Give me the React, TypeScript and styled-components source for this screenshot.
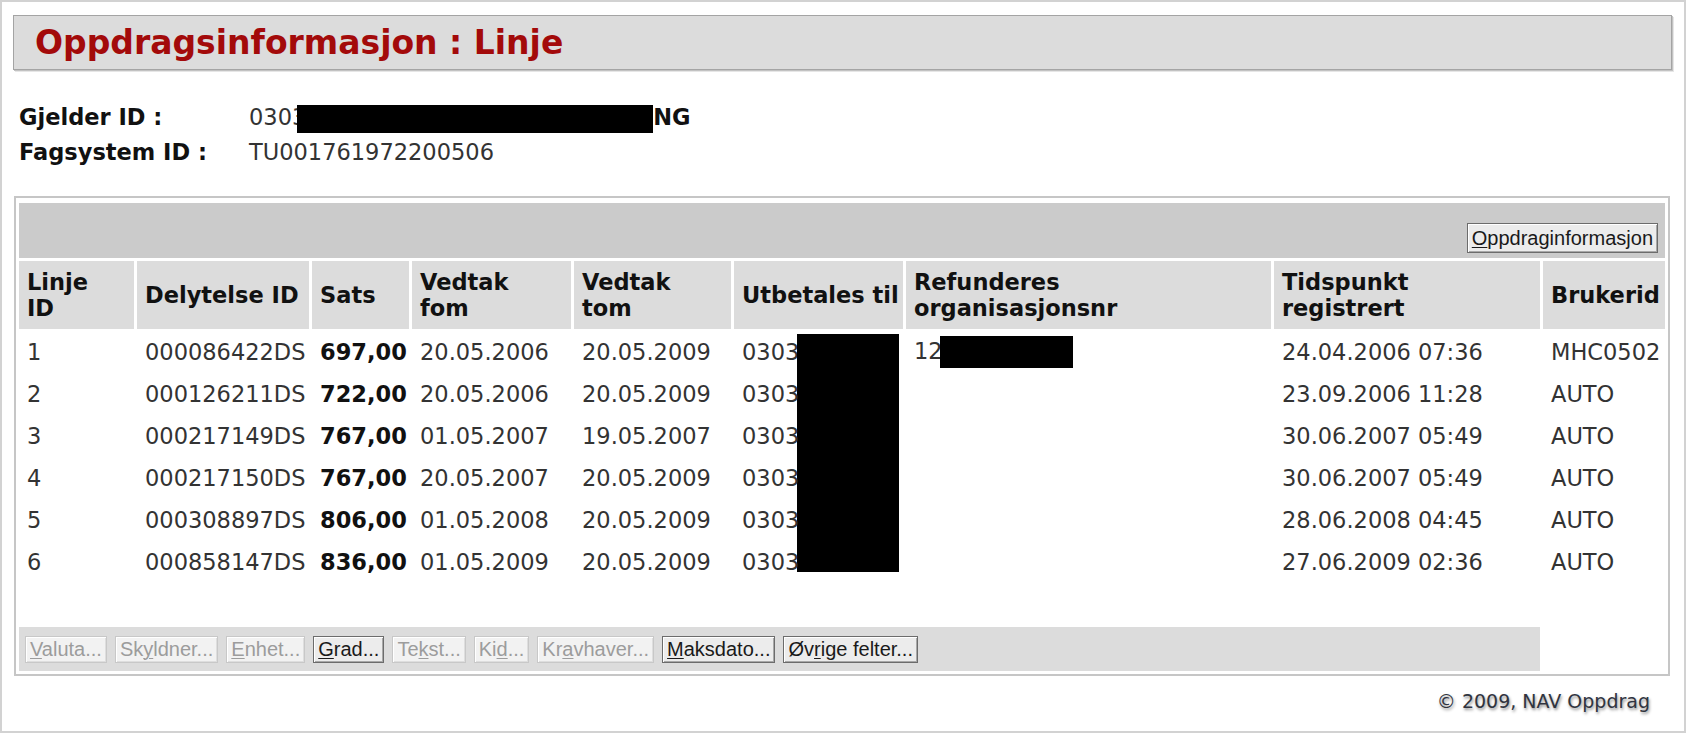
import React from "react";
import styled, { createGlobalStyle } from "styled-components";

const GlobalStyle = createGlobalStyle`
  html, body { margin: 0; padding: 0; background: #ffffff; }
  body { font-family: "DejaVu Sans", Verdana, sans-serif; }
`;

const Frame = styled.div`
  box-sizing: border-box;
  width: 1686px;
  height: 733px;
  border: 2px solid #d2d2d2;
  padding: 13px 12px 0 11px;
  font-family: "DejaVu Sans", Verdana, sans-serif;
  color: #333333;
`;

const TitleBar = styled.h1`
  margin: 0;
  box-sizing: border-box;
  height: 55px;
  display: flex;
  align-items: center;
  padding-left: 21px;
  background: #dcdcdc;
  border: 1px solid #a4a4a4;
  box-shadow: 1px 1px 0 #c2c2c2, 2px 2px 0 #e6e6e6;
  color: #a30a0a;
  font-size: 33px;
  font-weight: bold;
`;

const InfoGrid = styled.dl`
  margin: 30px 0 0 6px;
  display: grid;
  grid-template-columns: 230px auto;
  font-size: 22.5px;
  line-height: 35px;
`;

const InfoLabel = styled.dt`
  margin: 0;
  font-weight: bold;
  color: #111111;
`;

const InfoValue = styled.dd`
  margin: 0;
  color: #333333;
  white-space: nowrap;
`;

const Strong = styled.b`
  color: #111111;
`;

const Blackout = styled.span<{ $w: number; $h: number; $shift?: number }>`
  display: inline-block;
  width: ${(p) => p.$w}px;
  height: ${(p) => p.$h}px;
  margin-left: ${(p) => p.$shift ?? 0}px;
  background: #000000;
  vertical-align: middle;
`;

const Overlay = styled.span<{ $left: number; $top: number; $w: number; $h: number }>`
  position: absolute;
  left: ${(p) => p.$left}px;
  top: ${(p) => p.$top}px;
  width: ${(p) => p.$w}px;
  height: ${(p) => p.$h}px;
  background: #000000;
`;

const Panel = styled.section`
  margin: 26px 2px 0 1px;
  border: 2px solid #c6c6c6;
  padding-top: 2px;
`;

const Table = styled.table`
  width: 100%;
  table-layout: fixed;
  border-collapse: separate;
  border-spacing: 3px;
  font-size: 22.5px;
  line-height: 26px;
`;

const Col = styled.col<{ $w?: number }>`
  width: ${(p) => (p.$w ? `${p.$w}px` : "auto")};
`;

const ToolbarCell = styled.td`
  padding: 0;
  background: #cbcbcb;
`;

const Toolbar = styled.div`
  box-sizing: border-box;
  height: 55px;
  display: flex;
  align-items: flex-end;
  justify-content: flex-end;
  padding: 0 7px 5px;
`;

const HeadCell = styled.th`
  height: 68px;
  padding: 0 7px 0 8px;
  background: #dcdcdc;
  color: #111111;
  font-weight: bold;
  text-align: left;
  vertical-align: middle;
  white-space: nowrap;
`;

const Cell = styled.td<{ $bold?: boolean }>`
  position: relative;
  height: 39px;
  padding: 0 8px;
  white-space: nowrap;
  vertical-align: middle;
  color: ${(p) => (p.$bold ? "#111111" : "#333333")};
  font-weight: ${(p) => (p.$bold ? "bold" : "normal")};
`;

const SpacerCell = styled.td`
  height: 40px;
  padding: 0;
`;

const BarCell = styled.td`
  padding: 0;
  background: #dcdcdc;
`;

const EmptyCell = styled.td`
  padding: 0;
`;

const ButtonBar = styled.div`
  box-sizing: border-box;
  height: 44px;
  display: flex;
  align-items: center;
  gap: 8px;
  padding-left: 6px;
`;

const WinButton = styled.button<{ $h?: number }>`
  box-sizing: border-box;
  height: ${(p) => p.$h ?? 27}px;
  padding: 0 4px;
  margin: 0;
  font-family: "Liberation Sans", Arial, sans-serif;
  font-size: 20px;
  line-height: 1;
  white-space: nowrap;
  color: #1a1a1a;
  background: #ececec;
  border: 1px solid #6c6c6c;
  border-radius: 0;
  box-shadow: inset 1px 1px 0 #ffffff, inset -1px -1px 0 #a8a8a8;
  cursor: default;

  &:disabled {
    color: #9c9c9c;
    background: #f2f2f2;
    border-color: #c8c8c8;
    box-shadow: inset 1px 1px 0 #ffffff, inset -1px -1px 0 #dedede;
  }

  u {
    text-decoration-thickness: 1px;
    text-underline-offset: 2px;
  }
`;

const Footer = styled.footer`
  margin-top: 13px;
  padding-right: 22px;
  text-align: right;
  font-size: 19px;
  line-height: 24px;
  color: #30343f;
  text-shadow: 1px 2px 3px rgba(0, 0, 0, 0.45);
`;

type Row = {
  id: string;
  del: string;
  sats: string;
  fom: string;
  tom: string;
  tid: string;
  bruker: string;
};

const rows: Row[] = [
  { id: "1", del: "000086422DS", sats: "697,00", fom: "20.05.2006", tom: "20.05.2009", tid: "24.04.2006 07:36", bruker: "MHC0502" },
  { id: "2", del: "000126211DS", sats: "722,00", fom: "20.05.2006", tom: "20.05.2009", tid: "23.09.2006 11:28", bruker: "AUTO" },
  { id: "3", del: "000217149DS", sats: "767,00", fom: "01.05.2007", tom: "19.05.2007", tid: "30.06.2007 05:49", bruker: "AUTO" },
  { id: "4", del: "000217150DS", sats: "767,00", fom: "20.05.2007", tom: "20.05.2009", tid: "30.06.2007 05:49", bruker: "AUTO" },
  { id: "5", del: "000308897DS", sats: "806,00", fom: "01.05.2008", tom: "20.05.2009", tid: "28.06.2008 04:45", bruker: "AUTO" },
  { id: "6", del: "000858147DS", sats: "836,00", fom: "01.05.2009", tom: "20.05.2009", tid: "27.06.2009 02:36", bruker: "AUTO" },
];

type Btn = { pre: string; key: string; post: string; enabled?: boolean };

const buttons: Btn[] = [
  { pre: "", key: "V", post: "aluta..." },
  { pre: "Sk", key: "y", post: "ldner..." },
  { pre: "", key: "E", post: "nhet..." },
  { pre: "", key: "G", post: "rad...", enabled: true },
  { pre: "Te", key: "k", post: "st..." },
  { pre: "Ki", key: "d", post: "..." },
  { pre: "Kr", key: "a", post: "vhaver..." },
  { pre: "", key: "M", post: "aksdato...", enabled: true },
  { pre: "Øv", key: "r", post: "ige felter...", enabled: true },
];

const colWidths = [115, 172, 97, 159, 157, 169, 365, 266];

export default function App() {
  return (
    <>
      <GlobalStyle />
      <Frame>
        <TitleBar>Oppdragsinformasjon : Linje</TitleBar>

        <InfoGrid>
          <InfoLabel>Gjelder ID :</InfoLabel>
          <InfoValue>
            0303
            <Blackout $w={356} $h={28} $shift={-9} />
            <Strong>NG</Strong>
          </InfoValue>
          <InfoLabel>Fagsystem ID :</InfoLabel>
          <InfoValue>TU001761972200506</InfoValue>
        </InfoGrid>

        <Panel>
          <Table>
            <colgroup>
              {colWidths.map((w, i) => (
                <Col key={i} $w={w} />
              ))}
              <Col />
            </colgroup>
            <tbody>
              <tr>
                <ToolbarCell colSpan={9}>
                  <Toolbar>
                    <WinButton $h={30}>
                      <u>O</u>ppdraginformasjon
                    </WinButton>
                  </Toolbar>
                </ToolbarCell>
              </tr>
              <tr>
                <HeadCell>
                  Linje
                  <br />
                  ID
                </HeadCell>
                <HeadCell>Delytelse ID</HeadCell>
                <HeadCell>Sats</HeadCell>
                <HeadCell>
                  Vedtak
                  <br />
                  fom
                </HeadCell>
                <HeadCell>
                  Vedtak
                  <br />
                  tom
                </HeadCell>
                <HeadCell>Utbetales til</HeadCell>
                <HeadCell>
                  Refunderes
                  <br />
                  organisasjonsnr
                </HeadCell>
                <HeadCell>
                  Tidspunkt
                  <br />
                  registrert
                </HeadCell>
                <HeadCell>Brukerid</HeadCell>
              </tr>
              {rows.map((r, i) => (
                <tr key={r.id}>
                  <Cell>{r.id}</Cell>
                  <Cell>{r.del}</Cell>
                  <Cell $bold>{r.sats}</Cell>
                  <Cell>{r.fom}</Cell>
                  <Cell>{r.tom}</Cell>
                  <Cell>
                    0303
                    {i === 0 && <Overlay $left={63} $top={2} $w={102} $h={238} />}
                  </Cell>
                  <Cell>
                    {i === 0 && (
                      <>
                        12
                        <Blackout $w={133} $h={32} $shift={-3} />
                      </>
                    )}
                  </Cell>
                  <Cell>{r.tid}</Cell>
                  <Cell>{r.bruker}</Cell>
                </tr>
              ))}
              <tr>
                <SpacerCell colSpan={9} />
              </tr>
              <tr>
                <BarCell colSpan={8}>
                  <ButtonBar>
                    {buttons.map((b) => (
                      <WinButton key={b.pre + b.key + b.post} disabled={!b.enabled}>
                        {b.pre}
                        <u>{b.key}</u>
                        {b.post}
                      </WinButton>
                    ))}
                  </ButtonBar>
                </BarCell>
                <EmptyCell />
              </tr>
            </tbody>
          </Table>
        </Panel>

        <Footer>© 2009, NAV Oppdrag</Footer>
      </Frame>
    </>
  );
}
